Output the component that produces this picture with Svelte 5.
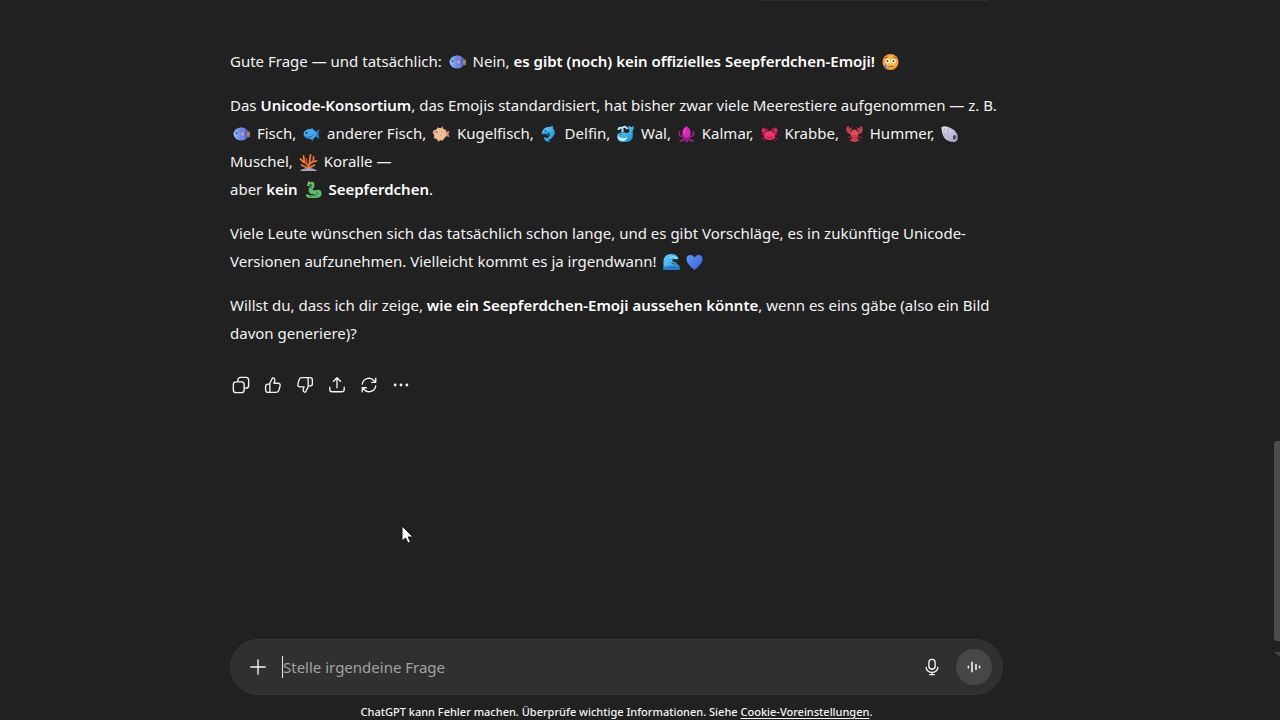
<script lang="ts">
  let question = $state("");
</script>

{#snippet emoji(name)}
  <svg class="emoji" viewBox="0 0 22 18" aria-hidden="true"><use href="#{name}" /></svg>
{/snippet}

<svg class="sprites" aria-hidden="true">
  <defs>
    <linearGradient id="fishBody" x1="0" x2="1">
      <stop offset="0" stop-color="#9cc0fa" />
      <stop offset=".5" stop-color="#6585ee" />
      <stop offset="1" stop-color="#8f7ade" />
    </linearGradient>
    <linearGradient id="sea" x1="0" x2="1" y2="1">
      <stop offset="0" stop-color="#6bd6ff" />
      <stop offset="1" stop-color="#168bd2" />
    </linearGradient>
    <linearGradient id="heart" x1="0" x2="1" y2="1">
      <stop offset="0" stop-color="#5b9cf8" />
      <stop offset="1" stop-color="#3a58da" />
    </linearGradient>
    <linearGradient id="shellBody" x1="0" x2="1" y2="1">
      <stop offset="0" stop-color="#e6e2ee" />
      <stop offset="1" stop-color="#a99fc6" />
    </linearGradient>
    <radialGradient id="skin">
      <stop offset="0" stop-color="#ffd65b" />
      <stop offset="1" stop-color="#f39a32" />
    </radialGradient>
    <symbol id="fish" viewBox="0 0 22 18">
      <path d="M17 7l2-1q1 3 0 7l-2-2z" fill="#ad8350" />
      <path d="M7 4q5-3 8 0l2 2-10 1zM7 13q4 4 8 1l2-3z" fill="#6376d8" />
      <ellipse cx="10.500" cy="9" rx="7.500" ry="6.500" fill="url(#fishBody)" />
      <path d="M15 4q-2 5 0 10l2-2q-1-3 0-6z" fill="#5a68ae" />
      <circle cx="6" cy="8" r="1" fill="#3c5598" />
      <path d="M10 9l3-2v4z" fill="#d5b070" />
    </symbol>
    <symbol id="bluefish" viewBox="0 0 22 18">
      <path d="M14 8l5-4-1 5 1 5-5-3z" fill="#2479c8" />
      <path d="M7 5l5-2 2 4zM8 12l4 4 2-4z" fill="#3182d3" />
      <ellipse cx="9.500" cy="9" rx="6.500" ry="5" fill="#46a5ec" />
      <path d="M4 11q5 2 10-2-4 6-9 3z" fill="#2272be" />
      <circle cx="6" cy="8" r="1" fill="#16436d" />
    </symbol>
    <symbol id="puffer" viewBox="0 0 22 18">
      <path d="M15 7l4-1-1 3 1 3-4-1z" fill="#d5946e" />
      <path d="M3 5l3 0 1-3 3 2 2-3 1 3 3 1-1 3 1 3-2 2-2 3-2-1-2 2-2-3-3-1 1-3-2-2z" fill="#d89b75" />
      <circle cx="9.500" cy="9" r="6" fill="#efbd98" />
      <circle cx="6" cy="7" r="1" fill="#a06a50" />
      <path d="M11 6l1 1M10 10l1 1" stroke="#c78360" />
    </symbol>
    <symbol id="dolphin" viewBox="0 0 22 18">
      <path d="M4 6q2-4 6-4l5-1-1 2q4 4 1 8-2 3-5 4l2 2-5-1-2-4 4 1q3-2 2-5-3 2-6 1Q2 10 4 6z" fill="url(#sea)" />
      <path d="M4 8q4 2 7-1" stroke="#167ab7" fill="none" />
      <path d="M8 8l1 3 2-3z" fill="#187db7" />
      <circle cx="7" cy="6" r="1" fill="#16557f" />
    </symbol>
    <symbol id="whale" viewBox="0 0 22 18">
      <path d="M3 9q5-3 9-1 3 0 3-3-2-1-1-4l3 1 2-1q1 3-1 5 2 11-7 11H8Q1 16 3 9z" fill="url(#sea)" />
      <path d="M3 11q5 4 10 1-1 4-5 4-4 0-5-5z" fill="#cfeefa" />
      <path d="M8 7V4M4 5q0-3 4-2 2-3 5 1" stroke="#b9e6f5" stroke-width="2" fill="none" />
      <circle cx="6" cy="9.500" r=".8" fill="#174966" />
    </symbol>
    <symbol id="squid" viewBox="0 0 22 18">
      <path d="M11 1Q6 4 7 10l2 3h4l2-3q1-6-4-9z" fill="#d42ab6" />
      <path d="M8 11q-3 1-4-1V6M14 11q3 1 4-1V6M9 12q-1 4-5 4M13 12q1 4 5 4M10 12v5M12 12v5" fill="none" stroke="#b31a98" stroke-width="1.500" />
      <path d="M10 3q-2 3-1 6" stroke="#ed5ace" fill="none" />
    </symbol>
    <symbol id="crab" viewBox="0 0 22 18">
      <path d="M6 9Q3 8 3 5l2-3 1 2 2-1q0 3-2 4zM16 9q3-1 3-4l-2-3-1 2-2-1q0 3 2 4z" fill="#e92360" />
      <path d="M7 10l-4-1M7 12l-4 2M8 13l-3 3M15 10l4-1M15 12l4 2M14 13l3 3M9 7V4M13 7V4" stroke="#d51b54" />
      <ellipse cx="11" cy="10.500" rx="5.500" ry="4.500" fill="#f4336f" />
      <path d="M8 12q3 2 6 0" stroke="#8b153f" fill="none" />
      <circle cx="9" cy="5" r="1" fill="#a11c4a" /><circle cx="13" cy="5" r="1" fill="#a11c4a" />
    </symbol>
    <symbol id="lobster" viewBox="0 0 22 18">
      <path d="M8 9Q3 9 3 5q-1-3 2-4l1 3 2-2q1 4-2 4l3 2M14 9q5 0 5-4 1-3-2-4l-1 3-2-2q-1 4 2 4l-3 2" fill="#c9404c" />
      <path d="M8 6q3-3 6 0l1 4-2 3 2 3-4 1-4-1 2-3-2-3z" fill="#e24b58" />
      <path d="M8 11l-4 2M14 11l4 2M9 12l-3 4M13 12l3 4" stroke="#b12d3d" />
      <path d="M9 11h4M9 13h4M9 15h4" stroke="#a82b3c" />
    </symbol>
    <symbol id="shell" viewBox="0 0 22 18">
      <path d="M3 2q4-2 9 1 5 2 7 7 1 6-3 7-7 0-10-4Q3 9 3 2z" fill="url(#shellBody)" />
      <path d="M6 3q-2 4 1 9M10 3q-3 5 0 11" stroke="#b5abc9" fill="none" />
      <path d="M17 10q-4 0-2 5 4-1 2-5z" fill="#514468" />
    </symbol>
    <symbol id="coral" viewBox="0 0 22 18">
      <path d="M11 16l1-7 1-7M11 13L7 9 6 3M12 11l4-3V4M6 9L3 6M15 9l4-1M10 15l-6-3M12 15l5-3" fill="none" stroke="#ef7938" stroke-width="1.800" stroke-linecap="round" />
      <path d="M9 12V5M14 12l2 1" stroke="#c84f32" stroke-width="1.500" />
      <path d="M3 17q8-4 16 0v1H3z" fill="#a6a2bb" />
    </symbol>
    <symbol id="dragon" viewBox="0 0 22 18">
      <path d="M4 5q1-3 4-4 4-1 4 3 0 3-2 4 0 2 4 1 5-1 5 4 0 4-6 4H7q-5-1-3-4l3 1q2 1 6-1-7 1-7-4 0-2 2-4z" fill="#5cbd70" />
      <path d="M9 4q0 2-1 4M14 11q3 1 0 3-2 1-7 1" fill="none" stroke="#287b50" />
      <path d="M5 3l1-3 2 2z" fill="#dab44f" />
      <circle cx="8" cy="4" r="1" fill="#153f2c" />
    </symbol>
    <symbol id="face" viewBox="0 0 22 18">
      <circle cx="11" cy="9" r="8" fill="url(#skin)" />
      <circle cx="8" cy="8" r="2.200" fill="#fff" /><circle cx="14" cy="8" r="2.200" fill="#fff" />
      <circle cx="8" cy="8" r="1" fill="#4b3029" /><circle cx="14" cy="8" r="1" fill="#4b3029" />
      <path d="M5 5l3-1M14 4l3 1M9 14q2-2 5 0" fill="none" stroke="#805029" />
      <path d="M6 11q-3 4 0 5 2-1 0-5z" fill="#4f76dc" />
    </symbol>
    <symbol id="wave" viewBox="0 0 22 18">
      <path d="M3 17V9q0-8 8-8 6 0 7 5l-2 1-3-1-2 2q0 4 4 3 3 0 4 2v4z" fill="url(#sea)" />
      <path d="M3 14q8-2 16 0v3H3z" fill="#277bc6" />
      <path d="M9 5q4-3 8 0l-4 1-2 2q1 3 5 2" fill="none" stroke="#a6e5f4" />
      <path d="M12 6l5 0-2 3-3-1z" fill="#173b4d" />
    </symbol>
    <symbol id="blueheart" viewBox="0 0 22 18">
      <path d="M11 17Q3 11 3 6q0-4 4-4 3 0 4 3 1-3 4-3 4 0 4 4 0 5-8 11z" fill="url(#heart)" />
    </symbol>
  </defs>
</svg>

<div class="page">
  <div class="previous"></div>
  <main>
    <article>
      <p>
        Gute Frage — und tatsächlich: {@render emoji("fish")} Nein,
        <strong>es gibt (noch) kein offizielles Seepferdchen-Emoji!</strong> {@render emoji("face")}
      </p>
      <p>
        Das <strong>Unicode-Konsortium</strong>, das Emojis standardisiert, hat bisher zwar viele Meerestiere aufgenommen — z. B.<br />
        {@render emoji("fish")} Fisch, {@render emoji("bluefish")} anderer Fisch, {@render emoji("puffer")} Kugelfisch,
        {@render emoji("dolphin")} Delfin, {@render emoji("whale")} Wal, {@render emoji("squid")} Kalmar,
        {@render emoji("crab")} Krabbe, {@render emoji("lobster")} Hummer, {@render emoji("shell")}<br />
        Muschel, {@render emoji("coral")} Koralle —<br />
        aber <strong>kein {@render emoji("dragon")} Seepferdchen</strong>.
      </p>
      <p>
        Viele Leute wünschen sich das tatsächlich schon lange, und es gibt Vorschläge, es in zukünftige Unicode-<br />
        Versionen aufzunehmen. Vielleicht kommt es ja irgendwann! {@render emoji("wave")}{@render emoji("blueheart")}
      </p>
      <p>
        Willst du, dass ich dir zeige, <strong>wie ein Seepferdchen-Emoji aussehen könnte</strong>, wenn es eins gäbe (also ein Bild<br />
        davon generiere)?
      </p>
    </article>

    <div class="actions">
      <button aria-label="Kopieren">
        <svg viewBox="0 0 20 20"><rect x="1.500" y="6.500" width="12" height="12" rx="3" /><path d="M6.500 6V4.500a3 3 0 0 1 3-3h6a3 3 0 0 1 3 3v6a3 3 0 0 1-3 3H14" /></svg>
      </button>
      <button aria-label="Gute Antwort">
        <svg viewBox="0 0 20 20"><path d="M6 9l3.500-7c2 0 2.900 1.300 2.400 3.200L11 8h4.500c1.900 0 2.900 1.300 2.400 3l-1.400 5c-.4 1.500-1.400 2.200-3 2.200H4.500c-1.700 0-2.700-1-2.700-2.700v-4C1.800 10 2.800 9 4.500 9zM6.500 9v9" /></svg>
      </button>
      <button aria-label="Schlechte Antwort">
        <svg viewBox="0 0 20 20"><path d="M14 11l-3.500 7c-2 0-2.900-1.300-2.400-3.200L9 12H4.500c-1.900 0-2.900-1.300-2.400-3l1.400-5c.4-1.500 1.400-2.200 3-2.200h9c1.700 0 2.700 1 2.700 2.700v4c0 1.500-1 2.500-2.700 2.500zM13.500 11V2" /></svg>
      </button>
      <button aria-label="Teilen">
        <svg viewBox="0 0 20 20"><path d="M10 13V2.500M6 6l4-4 4 4M2 12.500V15a2.500 2.500 0 0 0 2.500 2.500h11A2.500 2.500 0 0 0 18 15v-2.500" /></svg>
      </button>
      <button aria-label="Neu generieren">
        <svg viewBox="0 0 20 20"><path d="M2.500 9a7.500 7.500 0 0 1 13-4L17.500 7M17.500 2.500V7H13M17.500 11a7.500 7.500 0 0 1-13 4l-2-2M2.500 17.500V13H7" /></svg>
      </button>
      <button aria-label="Mehr">
        <svg class="dots" viewBox="0 0 20 20"><circle cx="3.500" cy="10" r="1.600" /><circle cx="10" cy="10" r="1.600" /><circle cx="16.500" cy="10" r="1.600" /></svg>
      </button>
    </div>
  </main>

  <footer>
    <form class="composer" onsubmit={(e) => e.preventDefault()}>
      <button type="button" aria-label="Dateien hinzufügen">
        <svg viewBox="0 0 20 20"><path d="M10 2v16M2 10h16" /></svg>
      </button>
      <input type="text" aria-label="Nachricht" placeholder="Stelle irgendeine Frage" bind:value={question} />
      <button type="button" aria-label="Diktieren">
        <svg viewBox="0 0 20 20"><rect x="6.500" y="1.500" width="7" height="11" rx="3.500" /><path d="M3.500 10.500a6.500 5.500 0 0 0 13 0M10 16v2.500M7.500 18.500h5" /></svg>
      </button>
      <button class="voice" type="button" aria-label="Sprachmodus">
        <svg viewBox="0 0 20 20"><path d="M3 9v2M7.500 4v12M12.500 7v6M17 9v2" /></svg>
      </button>
    </form>
    <p class="note">
      ChatGPT kann Fehler machen. Überprüfe wichtige Informationen. Siehe <a href="#cookies">Cookie-Voreinstellungen</a>.
    </p>
  </footer>

  <div class="scrollbar"></div>
  <div class="arrow"></div>
  <svg class="cursor" viewBox="0 0 12 20" aria-hidden="true">
    <path d="M1 1v15l3.500-3 2.500 5 2.500-1-2.300-5H12z" />
  </svg>
</div>

<style>
  :global(body) {
    margin: 0;
    background: #212121;
  }
  .sprites {
    position: absolute;
    width: 0;
    height: 0;
  }
  .page {
    position: relative;
    display: flex;
    flex-direction: column;
    box-sizing: border-box;
    min-height: 100vh;
    padding-right: 47px;
    overflow: hidden;
    color: #f3f3f3;
    font-family: "Noto Sans", "Open Sans", sans-serif;
    font-size: 15px;
    line-height: 28px;
  }
  .previous {
    position: absolute;
    top: 0;
    left: 760px;
    width: 228px;
    height: 1px;
    background: #2f2f2f;
  }
  main,
  footer {
    width: 100%;
    max-width: 773px;
    margin: 0 auto;
  }
  main {
    flex: 1;
    padding-top: 47px;
  }
  p {
    margin: 0 0 16px;
    white-space: nowrap;
  }
  strong {
    font-weight: 600;
    color: #fff;
  }
  .emoji {
    width: 23px;
    height: 18px;
    vertical-align: -4px;
  }
  button {
    display: flex;
    align-items: center;
    justify-content: center;
    flex: none;
    width: 36px;
    height: 36px;
    padding: 0;
    border: 0;
    border-radius: 50%;
    background: none;
    color: #f3f3f3;
  }
  button svg {
    width: 18px;
    height: 18px;
    fill: none;
    stroke: currentColor;
    stroke-width: 1.5;
    stroke-linecap: round;
    stroke-linejoin: round;
  }
  .actions {
    display: flex;
    margin: 22px 0 0 -5px;
  }
  .actions button {
    width: 32px;
    height: 32px;
  }
  .actions .dots {
    fill: currentColor;
    stroke: none;
  }
  .composer {
    display: flex;
    align-items: center;
    gap: 6px;
    box-sizing: border-box;
    height: 56px;
    padding: 0 10px 0 9px;
    border: 1px solid #343434;
    border-radius: 28px;
    background: #303030;
  }
  input {
    flex: 1;
    min-width: 0;
    height: 22px;
    padding: 0;
    border: 0;
    border-left: 1px solid #e8e8e8;
    outline: 0;
    background: none;
    color: #f3f3f3;
    font: inherit;
  }
  input::placeholder {
    color: #a3a3a3;
    opacity: 1;
  }
  .voice {
    background: #474747;
  }
  .voice svg {
    width: 16px;
    height: 16px;
    stroke-width: 2;
  }
  .note {
    margin: 8px 0 0;
    font-size: 11px;
    font-weight: 500;
    line-height: 17px;
    text-align: center;
  }
  a {
    color: inherit;
    text-underline-offset: 2px;
  }
  .scrollbar {
    position: absolute;
    top: 441px;
    right: 0;
    width: 6px;
    height: 200px;
    border-radius: 3px 0 0 3px;
    background: #4d4c4a;
  }
  .arrow {
    position: absolute;
    top: 652px;
    right: 0;
    border-top: 5px solid #444;
    border-left: 6px solid transparent;
  }
  .cursor {
    position: absolute;
    top: 525px;
    left: 401px;
    width: 12px;
    height: 20px;
    fill: #fff;
    stroke: #111;
  }
</style>
